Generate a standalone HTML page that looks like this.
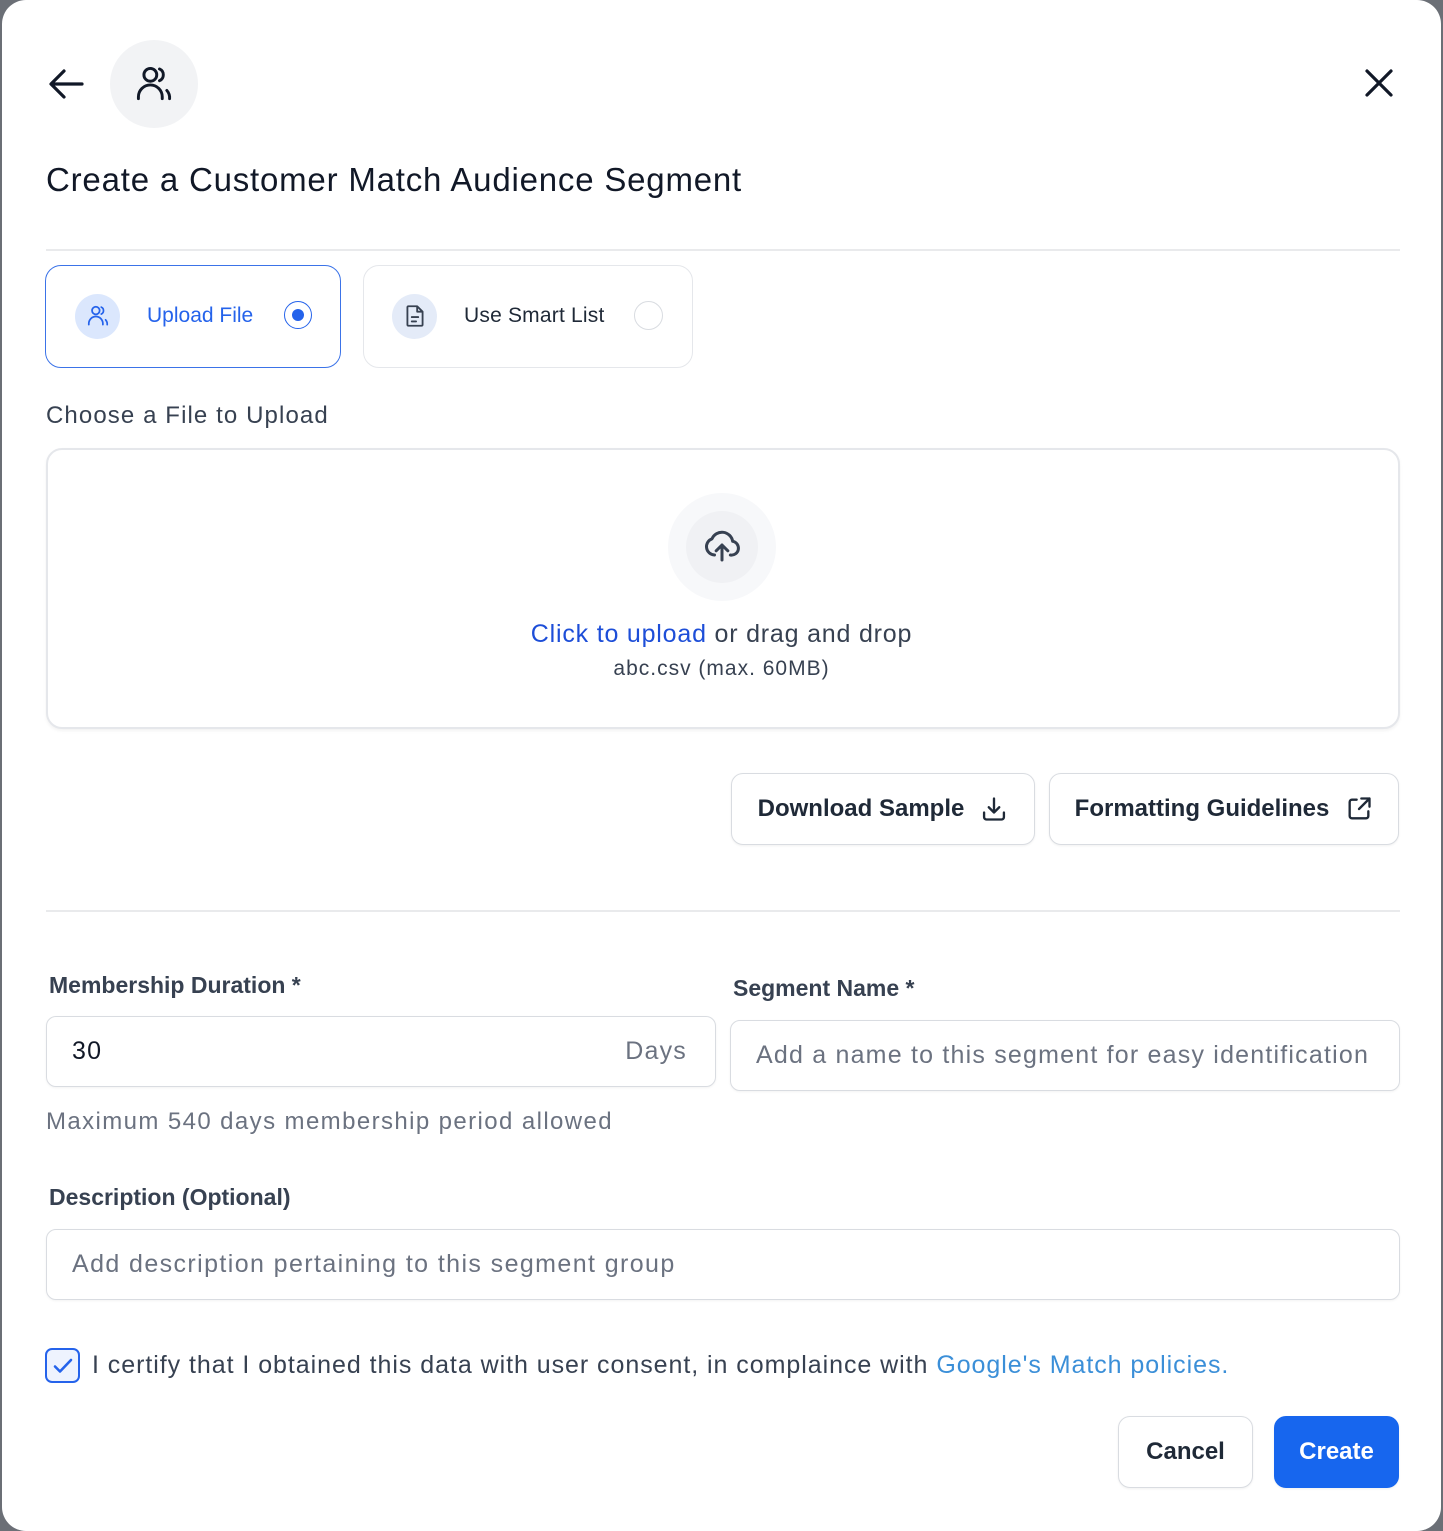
<!DOCTYPE html>
<html><head><meta charset="utf-8"><style>
*{box-sizing:border-box;margin:0;padding:0}
body{width:1443px;height:1531px;background:#6b6f76;font-family:"Liberation Sans",sans-serif;color:#111827;position:relative;overflow:hidden}
.m{position:absolute;left:2px;top:0;width:1439px;height:1531px;background:#fff;border-radius:24px}
.a{position:absolute}
.card{position:absolute;border-radius:16px;border:1px solid #e5e7eb;background:#fff}
.btn{position:absolute;border:1px solid #d9dce1;border-radius:12px;background:#fff;box-shadow:0 1px 2px rgba(0,0,0,.06);font-size:24px;font-weight:bold;color:#1f2937;display:flex;align-items:center;justify-content:center;gap:16px}
.lbl{position:absolute;font-size:23px;font-weight:bold;color:#374151}
.inp{position:absolute;border:1px solid #d9dce1;border-radius:10px;box-shadow:0 1px 2px rgba(0,0,0,.05);font-size:25px;color:#6b7280;padding-left:25px;display:flex;align-items:center;letter-spacing:1.2px}
</style></head><body>
<div class="m">
<svg class="a" style="left:46px;top:66px" width="38" height="36" viewBox="0 0 38 36" fill="none" stroke="#111827" stroke-width="3.2" stroke-linecap="round" stroke-linejoin="round"><path d="M34 18H4M16 5L3 18l13 13"/></svg>
<div class="a" style="left:108px;top:40px;width:88px;height:88px;border-radius:50%;background:#f2f3f5"></div>
<svg class="a" style="left:130px;top:62px" width="44" height="44" viewBox="0 0 24 24" fill="none" stroke="#111827" stroke-width="1.6" stroke-linecap="round"><circle cx="10" cy="7" r="3.5"/><path d="M3.5 20v-1a6.5 6.5 0 0113 0v1M15 3.8a3.5 3.5 0 010 6.4M19 15.5a6 6 0 011.5 4.5"/></svg>
<svg class="a" style="left:1362px;top:68px" width="30" height="30" viewBox="0 0 30 30" stroke="#111827" stroke-width="3.2" stroke-linecap="round"><path d="M3 3l24 24M27 3L3 27"/></svg>
<div class="a" style="left:44px;top:161px;font-size:33px;color:#111827;letter-spacing:0.8px">Create a Customer Match Audience Segment</div>
<div class="a" style="left:44px;top:249px;width:1354px;height:2px;background:#e9eaec"></div>
<div class="card" style="left:43px;top:265px;width:296px;height:103px;border:1.5px solid #3b73e8"></div>
<div class="a" style="left:73px;top:294px;width:45px;height:45px;border-radius:50%;background:#dbe7fd"></div>
<svg class="a" style="left:83px;top:303px" width="26" height="26" viewBox="0 0 24 24" fill="none" stroke="#2563eb" stroke-width="1.6" stroke-linecap="round"><circle cx="10" cy="7" r="3.5"/><path d="M3.5 20v-1a6.5 6.5 0 0113 0v1M15 3.8a3.5 3.5 0 010 6.4M19 15.5a6 6 0 011.5 4.5"/></svg>
<div class="a" style="left:145px;top:304px;font-size:21px;color:#2563eb">Upload File</div>
<div class="a" style="left:282px;top:301px;width:28px;height:28px;border-radius:50%;border:1.5px solid #2563eb"></div>
<div class="a" style="left:290px;top:309px;width:12px;height:12px;border-radius:50%;background:#2563eb"></div>
<div class="card" style="left:361px;top:265px;width:330px;height:103px"></div>
<div class="a" style="left:390px;top:294px;width:45px;height:45px;border-radius:50%;background:#e4ebf8"></div>
<svg class="a" style="left:400px;top:303px" width="26" height="26" viewBox="0 0 24 24" fill="none" stroke="#374151" stroke-width="1.7" stroke-linejoin="round" stroke-linecap="round"><path d="M6 3h8l5 5v12a1 1 0 01-1 1H6a1 1 0 01-1-1V4a1 1 0 011-1zM14 3v5h5M9 13h6M9 17h4"/></svg>
<div class="a" style="left:462px;top:304px;font-size:21px;color:#1f2937;letter-spacing:0.2px">Use Smart List</div>
<div class="a" style="left:632px;top:301px;width:29px;height:29px;border-radius:50%;border:1.5px solid #d9dce1"></div>
<div class="a" style="left:44px;top:402px;font-size:24px;color:#374151;letter-spacing:1.1px">Choose a File to Upload</div>
<div class="card" style="left:44px;top:448px;width:1354px;height:281px;border:2px solid #e5e7eb;box-shadow:0 2px 3px rgba(0,0,0,.05)"></div>
<div class="a" style="left:666px;top:493px;width:108px;height:108px;border-radius:50%;background:#f7f8fa"></div>
<div class="a" style="left:684px;top:511px;width:72px;height:72px;border-radius:50%;background:#f0f1f4"></div>
<svg class="a" style="left:700px;top:525px" width="40" height="40" viewBox="0 0 24 24" fill="none" stroke="#374151" stroke-width="1.8" stroke-linecap="round" stroke-linejoin="round"><path d="M12 21v-9M8.5 15.5L12 12l3.5 3.5M7.5 18A5 5 0 016 8.3a6.5 6.5 0 0112.4 1.5A4 4 0 0117 18"/></svg>
<div class="a" style="left:0;width:1439px;top:620px;text-align:center;font-size:25px;color:#374151;letter-spacing:0.8px"><span style="color:#1d4ed8">Click to upload</span> or drag and drop</div>
<div class="a" style="left:0;width:1439px;top:657px;text-align:center;font-size:21px;color:#374151;letter-spacing:1px">abc.csv (max. 60MB)</div>
<div class="btn" style="left:729px;top:773px;width:304px;height:72px">Download Sample
<svg width="28" height="28" viewBox="0 0 24 24" fill="none" stroke="#1f2937" stroke-width="2" stroke-linecap="round" stroke-linejoin="round"><path d="M12 3v12M7.5 10.5L12 15l4.5-4.5M3.5 15v4a2 2 0 002 2h13a2 2 0 002-2v-4"/></svg></div>
<div class="btn" style="left:1047px;top:773px;width:350px;height:72px">Formatting Guidelines
<svg width="28" height="28" viewBox="0 0 24 24" fill="none" stroke="#1f2937" stroke-width="2" stroke-linecap="round" stroke-linejoin="round"><path d="M10 4H6a2 2 0 00-2 2v12a2 2 0 002 2h12a2 2 0 002-2v-4M14 3h7v7M21 3l-9 9"/></svg></div>
<div class="a" style="left:44px;top:910px;width:1354px;height:2px;background:#e9eaec"></div>
<div class="lbl" style="left:47px;top:972px">Membership Duration *</div>
<div class="inp" style="left:44px;top:1016px;width:670px;height:71px;color:#111827">30<span style="position:absolute;right:28px;color:#6b7280">Days</span></div>
<div class="a" style="left:44px;top:1108px;font-size:24px;color:#6b7280;letter-spacing:1.4px">Maximum 540 days membership period allowed</div>
<div class="lbl" style="left:731px;top:975px">Segment Name *</div>
<div class="inp" style="left:728px;top:1020px;width:670px;height:71px">Add a name to this segment for easy identification</div>
<div class="lbl" style="left:47px;top:1184px">Description (Optional)</div>
<div class="inp" style="left:44px;top:1229px;width:1354px;height:71px;letter-spacing:1.4px">Add description pertaining to this segment group</div>
<div class="a" style="left:43px;top:1348px;width:35px;height:35px;border:2px solid #2563eb;border-radius:7px;background:#eef3fe"></div>
<svg class="a" style="left:49px;top:1354px" width="24" height="24" viewBox="0 0 24 24" fill="none" stroke="#2563eb" stroke-width="2.6" stroke-linecap="round" stroke-linejoin="round"><path d="M4 12.5l5 5L20 6"/></svg>
<div class="a" style="left:90px;top:1351px;font-size:25px;color:#374151;letter-spacing:0.95px">I certify that I obtained this data with user consent, in complaince with <span style="color:#3b8fd8">Google's Match policies.</span></div>
<div class="btn" style="left:1116px;top:1416px;width:135px;height:72px">Cancel</div>
<div class="btn" style="left:1272px;top:1416px;width:125px;height:72px;background:#1766ee;border-color:#1766ee;color:#fff">Create</div>
</div>
</body></html>
